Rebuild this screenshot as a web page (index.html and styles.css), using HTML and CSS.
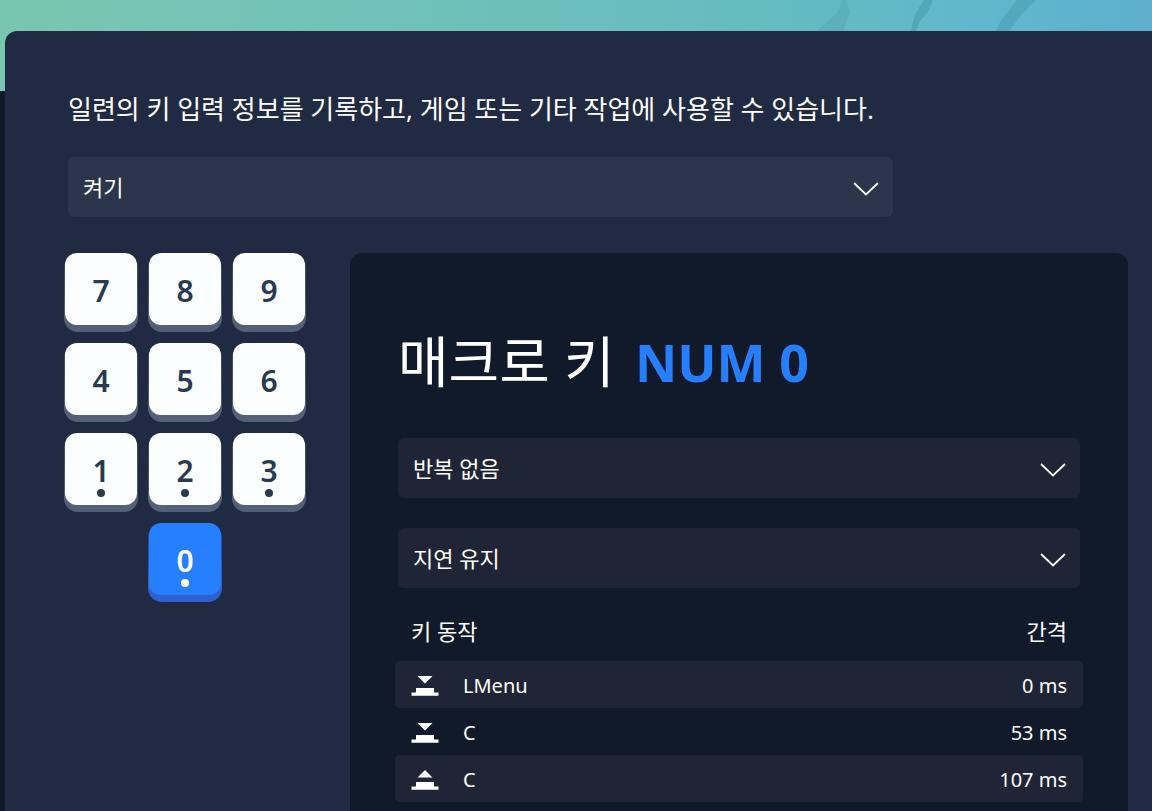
FILE: index.html
```html
<!DOCTYPE html>
<html lang="ko">
<head>
    <meta charset="UTF-8">
    <meta name="viewport" content="width=device-width, initial-scale=1.0">
    <title>매크로 키</title>
    <link rel="stylesheet" href="styles.css">
</head>
<body>
    <div class="banner">
        <svg class="banner-art" width="340" height="31" viewBox="0 0 340 31" aria-hidden="true">
            <path d="M4 31 L24 14 L31 0 L34 0 L38 13 L31 31 Z" fill="#4f9fa8" opacity="0.35"/>
            <path d="M99 31 L103 14 L112 0 L121 0 L116 12 L108 21 L104 31 Z" fill="#3f95a5" opacity="0.45"/>
            <path d="M184 31 L188 22 L205 0 L224 0 L210 14 L197 31 Z" fill="#4796ae" opacity="0.45"/>
        </svg>
    </div>

    <main class="panel">
        <div class="intro">
            <p class="intro-text">일련의 키 입력 정보를 기록하고, 게임 또는 기타 작업에 사용할 수 있습니다.</p>
            <div class="dropdown dropdown-light">
                <select aria-label="매크로 사용">
                    <option>켜기</option>
                </select>
                <svg class="chevron" viewBox="0 0 26 14" aria-hidden="true"><path d="M1 1 L13 12.5 L25 1"/></svg>
            </div>
        </div>

        <div class="content">
            <div class="keypad">
                <button class="key" type="button"><span class="cap">7</span></button>
                <button class="key" type="button"><span class="cap">8</span></button>
                <button class="key" type="button"><span class="cap">9</span></button>
                <button class="key" type="button"><span class="cap">4</span></button>
                <button class="key" type="button"><span class="cap">5</span></button>
                <button class="key" type="button"><span class="cap">6</span></button>
                <button class="key recorded" type="button"><span class="cap">1</span></button>
                <button class="key recorded" type="button"><span class="cap">2</span></button>
                <button class="key recorded" type="button"><span class="cap">3</span></button>
                <button class="key recorded selected" type="button"><span class="cap">0</span></button>
            </div>

            <section class="macro">
                <h1>매크로 키 <span class="key-name">NUM 0</span></h1>
                <div class="dropdown">
                    <select aria-label="반복">
                        <option>반복 없음</option>
                    </select>
                    <svg class="chevron" viewBox="0 0 26 14" aria-hidden="true"><path d="M1 1 L13 12.5 L25 1"/></svg>
                </div>
                <div class="dropdown">
                    <select aria-label="지연">
                        <option>지연 유지</option>
                    </select>
                    <svg class="chevron" viewBox="0 0 26 14" aria-hidden="true"><path d="M1 1 L13 12.5 L25 1"/></svg>
                </div>

                <table class="actions">
                    <thead>
                        <tr>
                            <th colspan="2">키 동작</th>
                            <th class="delay">간격</th>
                        </tr>
                    </thead>
                    <tbody>
                        <tr>
                            <td class="icon"><svg width="28" height="20" viewBox="0 0 28 20" role="img" aria-label="누름"><path d="M6.500 0 H21.500 L14 7.500 Z M5 12 H23 V16.500 H27.500 V19.700 H0.500 V16.500 H5 Z"/></svg></td>
                            <td>LMenu</td>
                            <td class="delay">0 ms</td>
                        </tr>
                        <tr>
                            <td class="icon"><svg width="28" height="20" viewBox="0 0 28 20" role="img" aria-label="누름"><path d="M6.500 0 H21.500 L14 7.500 Z M5 12 H23 V16.500 H27.500 V19.700 H0.500 V16.500 H5 Z"/></svg></td>
                            <td>C</td>
                            <td class="delay">53 ms</td>
                        </tr>
                        <tr>
                            <td class="icon"><svg width="28" height="20" viewBox="0 0 28 20" role="img" aria-label="뗌"><path d="M6.500 7.500 H21.500 L14 0 Z M5 12 H23 V16.500 H27.500 V19.700 H0.500 V16.500 H5 Z"/></svg></td>
                            <td>C</td>
                            <td class="delay">107 ms</td>
                        </tr>
                    </tbody>
                </table>
            </section>
        </div>
    </main>
</body>
</html>
```
FILE: styles.css
```css
* {
    box-sizing: border-box;
}
body {
    display: flex;
    flex-direction: column;
    min-height: 100vh;
    margin: 0;
    background-color: #111a2b;
    color: #fff;
    font-family: "Noto Sans", "Noto Sans CJK KR", sans-serif;
}
/* Banner behind the panel */
.banner {
    position: absolute;
    top: 0;
    left: 0;
    right: 0;
    height: 91px;
    background: linear-gradient(90deg, #79c6ae 0%, #74c3b8 25%, #6dbfba 45%, #62bbc3 72%, #60b8cd 85%, #5eb0cc 100%);
}
.banner-art {
    position: absolute;
    top: 0;
    right: 0;
}
.panel {
    position: relative;
    display: flex;
    flex-direction: column;
    flex: 1;
    margin: 31px 0 0 5px;
    padding: 58px 24px 0 59px;
    background-color: #202a42;
    border-top-left-radius: 12px;
}
.intro {
    max-width: 833px;
    padding: 0 4px;
}
.intro-text {
    margin: 0 0 28px;
    font-size: 26px;
    line-height: 40px;
}
/* Dropdowns */
.dropdown {
    position: relative;
    margin-bottom: 30px;
}
.dropdown select {
    display: block;
    width: 100%;
    height: 60px;
    padding: 0 48px 0 15px;
    border: 0;
    border-radius: 6px;
    appearance: none;
    background-color: #1f2536;
    color: #fff;
    font-family: inherit;
    font-size: 22px;
}
.intro .dropdown {
    margin-bottom: 36px;
}
.dropdown-light select {
    background-color: #2b354b;
}
.chevron {
    position: absolute;
    right: 14px;
    top: 25px;
    width: 26px;
    height: 14px;
    fill: none;
    stroke: #fff;
    stroke-width: 1.8;
    pointer-events: none;
}
.content {
    display: flex;
    flex: 1;
    gap: 44px;
}
/* Number keys */
.keypad {
    display: grid;
    grid-template-columns: repeat(3, 74px);
    align-content: start;
    gap: 11px 10px;
}
.key {
    height: 79px;
    padding: 0 1px 7px;
    border: 0;
    border-radius: 14px;
    background: linear-gradient(transparent 8px, #3d4861 12px, #545f78 64px);
    color: #283a50;
    font-family: inherit;
    font-size: 30px;
    font-weight: 600;
    cursor: pointer;
}
.cap {
    position: relative;
    display: flex;
    align-items: center;
    justify-content: center;
    height: 72px;
    padding-top: 2px;
    border-radius: 12px;
    background-color: #fcfdff;
}
.recorded .cap::after {
    content: "";
    position: absolute;
    bottom: 8px;
    left: 50%;
    width: 8px;
    height: 8px;
    margin-left: -4px;
    border-radius: 50%;
    background-color: currentColor;
}
.selected {
    grid-column: 2;
    background: linear-gradient(transparent 8px, #27479b 12px, #2f5fd0 64px);
    color: #fff;
}
.selected .cap {
    background-color: #267fff;
}
/* Macro details */
.macro {
    flex: 1;
    padding: 68px 48px 0;
    border-radius: 12px 12px 0 0;
    background-color: #111a2b;
}
h1 {
    margin: 0 0 36px;
    font-size: 55px;
    font-weight: 400;
    line-height: 80px;
}
.key-name {
    margin-left: 6px;
    color: #267fff;
    font-size: 52px;
    font-weight: 700;
}
.actions {
    width: calc(100% + 6px);
    margin: -16px -3px 0;
    border-collapse: collapse;
    font-size: 20px;
    line-height: 28px;
}
.actions th {
    height: 59px;
    padding: 0 16px 2px;
    font-size: 22px;
    font-weight: 400;
    text-align: left;
}
.actions td {
    height: 47px;
    padding: 2px 16px 0 8px;
}
.actions .icon {
    width: 60px;
    padding: 2px 0 0 16px;
}
.actions .icon svg {
    display: block;
    fill: #fff;
}
.actions .delay {
    text-align: right;
}
.actions tbody tr:nth-child(odd) td {
    background-color: #1f2536;
}
.actions td:first-child {
    border-radius: 5px 0 0 5px;
}
.actions td:last-child {
    border-radius: 0 5px 5px 0;
}
```
